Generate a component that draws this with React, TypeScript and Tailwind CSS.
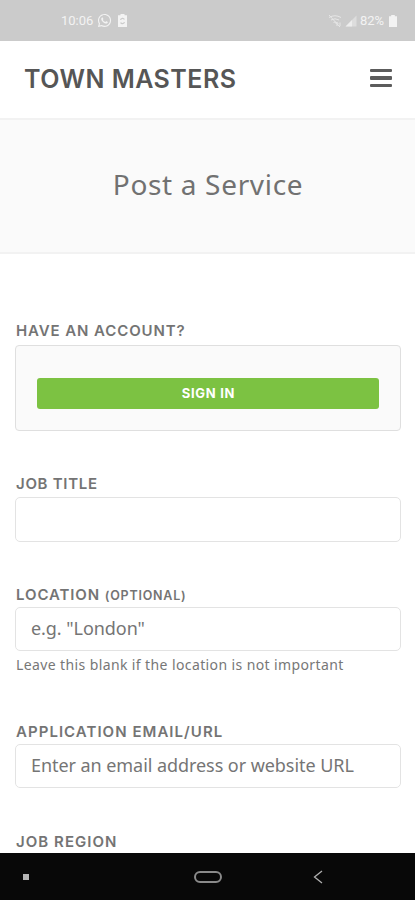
import { useState } from "react";
import type { ReactNode } from "react";
import { FaWhatsapp } from "react-icons/fa";

function StatusBar() {
  return (
    <div className="flex h-[41px] shrink-0 items-center bg-[#cbcbcb] pl-[61px] pr-[18px] text-[13px] leading-none text-[#f3f3f3]">
      <span className="w-[33px] whitespace-nowrap font-['Roboto',sans-serif]">10:06</span>
      <FaWhatsapp className="ml-[3px] size-[15px]" />
      <svg className="ml-[6px] h-[13px] w-[9px]" viewBox="0 0 9 13">
        <path d="M2.5 0h4v1.2H9V13H0V1.2h2.5z" fill="currentColor" />
        <path d="M2.6 6a2 2 0 0 1 3.8-.5M6.4 8a2 2 0 0 1-3.8.5" stroke="#cbcbcb" strokeWidth="1.2" fill="none" />
      </svg>
      <div className="ml-auto flex items-center">
        <svg className="h-[14px] w-[14px] opacity-70" viewBox="0 0 14 14" fill="none" stroke="currentColor" strokeWidth="1">
          <path d="M1 3.5Q7 0 13 3.5M3 6Q7 3.5 11 6M5.5 8.5Q7 7.5 8.5 8.5M1 1l11 12" />
          <path d="M9 12V8.5M7.7 9.7 9 8.3l1.3 1.4M12 8.5V12" />
        </svg>
        <svg className="ml-[3px] h-[12px] w-[12px]" viewBox="0 0 12 12">
          <path d="M0.5 11.5 11.5 0.5v11z" fill="currentColor" opacity=".45" />
          <path d="M0.5 11.5 7 5v6.5z" fill="currentColor" opacity=".7" />
        </svg>
        <span className="ml-[3px] w-[24px] whitespace-nowrap font-['Roboto',sans-serif]">82%</span>
        <svg className="ml-[5px] h-[12px] w-[8px]" viewBox="0 0 8 12">
          <path d="M2.2 0h3.6v1.2H8V12H0V1.2h2.2z" fill="currentColor" />
        </svg>
      </div>
    </div>
  );
}

function Label({ children, className }: { children: ReactNode; className: string }) {
  return (
    <div className={`whitespace-nowrap pl-px text-[15px] font-semibold leading-[20px] text-[#747474] ${className}`}>
      {children}
    </div>
  );
}

const inputStyle =
  "block w-full rounded-[5px] border border-[#e3e3e3] bg-white px-[15px] pb-[3px] font-['Noto_Sans',sans-serif] text-[18px] tracking-[-0.06px] text-[#707070] placeholder:text-[#757575] outline-none";

export default function App() {
  const [form, setForm] = useState({ title: "", location: "", application: "" });

  const handleChange = (e: React.ChangeEvent<HTMLInputElement>) => {
    setForm({ ...form, [e.target.name]: e.target.value });
  };

  return (
    <div className="flex h-[900px] w-[415px] flex-col overflow-hidden bg-white font-['Inter',sans-serif]">
      <StatusBar />

      <header className="flex h-[77px] shrink-0 items-center justify-between pb-[3px] pl-[24px] pr-[23px]">
        <h1 className="mt-[4px] whitespace-nowrap text-[25px] font-semibold tracking-[0.47px] text-[#565656]">TOWN MASTERS</h1>
        <button className="flex w-[22px] flex-col gap-[4px]" aria-label="Menu">
          <span className="h-[3.5px] w-full rounded-[1px] bg-[#5c5c5c]" />
          <span className="h-[3.5px] w-full rounded-[1px] bg-[#5c5c5c]" />
          <span className="h-[3.5px] w-full rounded-[1px] bg-[#5c5c5c]" />
        </button>
      </header>

      <div className="flex h-[136px] shrink-0 items-center justify-center border-y-2 border-[#f2f2f2] bg-[#fafafa] pb-[5px] pl-px">
        <h2 className="whitespace-nowrap font-['Noto_Sans',sans-serif] text-[28px] leading-[36px] tracking-[0.67px] text-[#717171]">Post a Service</h2>
      </div>

      <main className="flex min-h-0 flex-1 flex-col overflow-hidden pl-[15px] pr-[14px] pt-[67px]">
        <Label className="tracking-[0.9px]">HAVE AN ACCOUNT?</Label>
        <div className="mt-[4px] h-[86px] shrink-0 rounded-[4px] border border-[#dfdfdf] bg-[#fafafa] px-[21px] pt-[32px]">
          <button className="flex h-[31px] w-full items-center justify-center rounded-[3px] bg-[#7cc242] pl-px text-[13px] font-bold tracking-[0.7px] text-white">
            SIGN IN
          </button>
        </div>

        <div className="mt-[43px] shrink-0">
          <Label className="tracking-[0.7px]">JOB TITLE</Label>
          <input name="title" value={form.title} onChange={handleChange} className={`mt-[3px] h-[45px] ${inputStyle}`} />
        </div>

        <div className="mt-[43px] shrink-0">
          <Label className="tracking-[0.9px]">
            LOCATION <small className="text-[12.5px] tracking-[0.78px]">(OPTIONAL)</small>
          </Label>
          <input name="location" value={form.location} onChange={handleChange} placeholder={'e.g. "London"'} className={`mt-px h-[44px] ${inputStyle}`} />
          <p className="mt-[4px] whitespace-nowrap pl-px font-['Noto_Sans',sans-serif] text-[14px] leading-[20px] tracking-[0.39px] text-[#777777]">
            Leave this blank if the location is not important
          </p>
        </div>

        <div className="mt-[47px] shrink-0">
          <Label className="tracking-[1.04px]">APPLICATION EMAIL/URL</Label>
          <input name="application" value={form.application} onChange={handleChange} placeholder="Enter an email address or website URL" className={`mt-[2px] h-[44px] ${inputStyle}`} />
        </div>

        <div className="mt-[44px] shrink-0">
          <Label className="tracking-[1.05px]">JOB REGION</Label>
        </div>
      </main>

      <nav className="flex h-[47px] shrink-0 items-center bg-[#080808]">
        <span className="ml-[23px] size-[6px] bg-[#b5b5b5]" />
        <span className="ml-[165px] h-[12px] w-[28px] rounded-full border-2 border-[#8a8a8a]" />
        <svg className="ml-[91px] h-[14px] w-[10px]" viewBox="0 0 10 14" fill="none" stroke="#b0b0b0" strokeWidth="1.3">
          <path d="M9 1 1.5 7 9 13" />
        </svg>
      </nav>
    </div>
  );
}
